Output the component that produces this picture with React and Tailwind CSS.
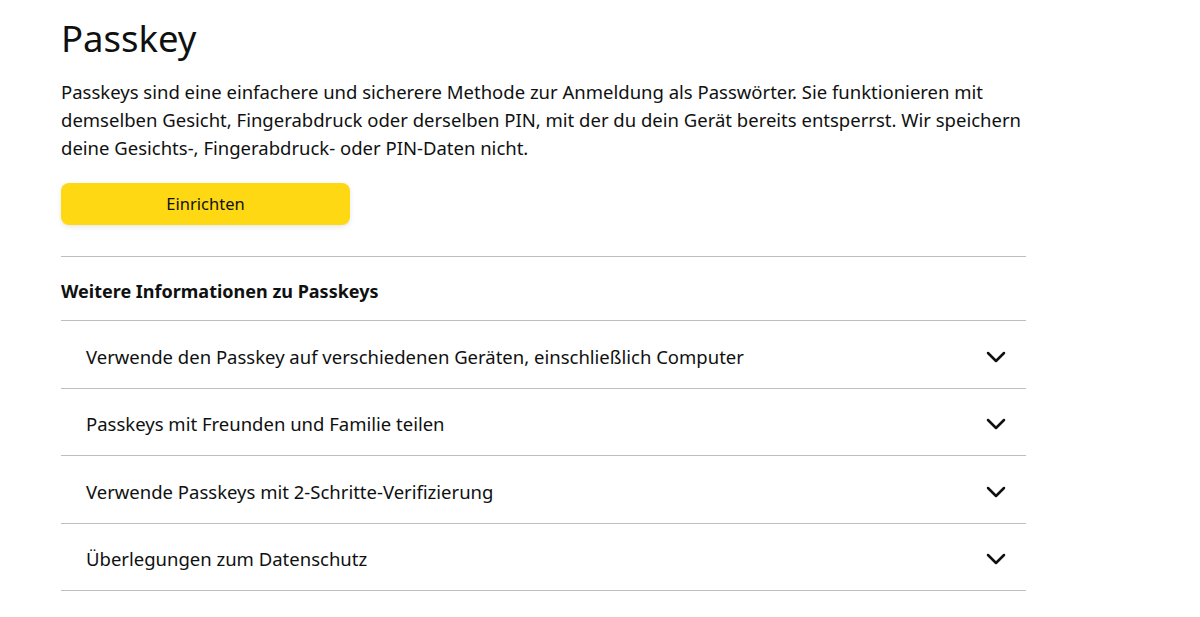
import React from "react";

const items = [
  "Verwende den Passkey auf verschiedenen Geräten, einschließlich Computer",
  "Passkeys mit Freunden und Familie teilen",
  "Verwende Passkeys mit 2-Schritte-Verifizierung",
  "Überlegungen zum Datenschutz",
];

function Chevron() {
  return (
    <svg width="20" height="12" viewBox="0 0 20 12" fill="none">
      <path d="M2 2l8 8 8-8" stroke="#0f1111" strokeWidth="2.5" strokeLinecap="round" strokeLinejoin="round" />
    </svg>
  );
}

export default function App() {
  return (
    <div className="min-h-[617px] bg-white text-[#0f1111]" style={{ fontFamily: '"Noto Sans", "Open Sans", sans-serif' }}>
      <div className="ml-[61px] w-[965px] pt-[14px]">
        <h1 className="text-[36.5px] leading-[48px] font-normal">Passkey</h1>
        <p className="mt-[16px] text-[18.5px] leading-[28px]">
          Passkeys sind eine einfachere und sicherere Methode zur Anmeldung als Passwörter. Sie funktionieren mit demselben Gesicht, Fingerabdruck oder derselben PIN, mit der du dein Gerät bereits entsperrst. Wir speichern deine Gesichts-, Fingerabdruck- oder PIN-Daten nicht.
        </p>
        <button className="mt-[21px] flex h-[42px] w-[289px] items-center justify-center rounded-[8px] bg-[#ffd814] text-[16.5px] shadow-[0_2px_5px_rgba(213,217,217,0.6)]">
          Einrichten
        </button>
        <div className="mt-[31px] border-t border-[#bbbfbf]" />
        <div className="flex h-[63px] items-center pt-[5px] text-[18px] font-bold">Weitere Informationen zu Passkeys</div>
        <div className="border-t border-[#bbbfbf]" />
        {items.map((t) => (
          <div key={t} className="flex h-[67.5px] items-center justify-between border-b border-[#bbbfbf] pt-[5px] pl-[25px] pr-[20px] text-[18.5px]">
            <span>{t}</span>
            <Chevron />
          </div>
        ))}
      </div>
    </div>
  );
}
